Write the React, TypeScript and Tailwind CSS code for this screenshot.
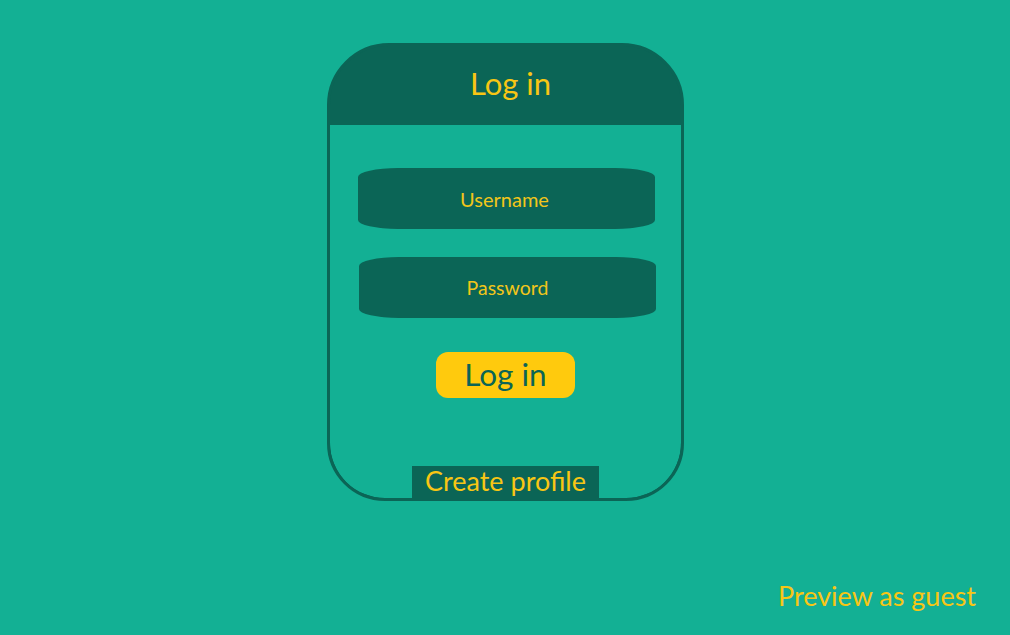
export default function App() {
  return (
    <div
      className="w-[1010px] h-[635px] bg-[#13b094] flex flex-col overflow-hidden"
      style={{ fontFamily: "Lato, 'Open Sans', sans-serif" }}
    >
      {/* Login card */}
      <div className="mt-[43px] ml-[327px] w-[357px] h-[458px] border-[3px] border-[#0b6556] bg-[#0b6556] rounded-t-[62px] rounded-b-[58px] overflow-hidden flex flex-col">
        <div className="h-[79px] flex items-center justify-center pb-[4px] pl-[10px]">
          <span className="text-[31px] text-[#f8c614]">Log in</span>
        </div>

        <div className="flex flex-col items-center flex-1 pt-[43px] bg-[#13b094] rounded-b-[55px]">
          <div className="w-[297px] h-[61px] bg-[#0b6556] rounded-[40px/9px] flex items-center justify-center ml-[2px] pr-[4px]">
            <span className="text-[20px] text-[#f2c61a]">Username</span>
          </div>
          <div className="w-[297px] h-[61px] bg-[#0b6556] rounded-[40px/9px] flex items-center justify-center mt-[28px] ml-[4px]">
            <span className="text-[19.5px] text-[#f2c61a]">Password</span>
          </div>

          <button className="mt-[34px] w-[139px] h-[46px] bg-[#ffca0d] rounded-[12px] flex items-center justify-center">
            <span className="text-[31.5px] text-[#0b6556]">Log in</span>
          </button>

          <div className="mt-auto w-[187px] h-[32px] bg-[#0b6556] flex items-center justify-center pb-[3px]">
            <span className="text-[27px] text-[#f8c614] leading-none">Create profile</span>
          </div>
        </div>
      </div>

      <div className="mt-[81px] ml-[778px] text-[27px] text-[#f8c614] leading-none">Preview as guest</div>
    </div>
  );
}
